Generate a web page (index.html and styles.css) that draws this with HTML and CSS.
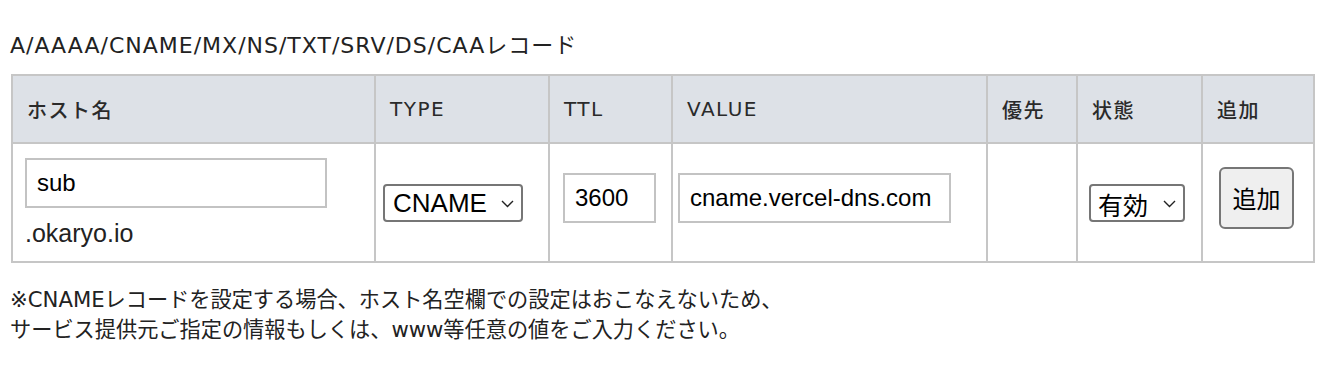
FILE: index.html
```html
<!DOCTYPE html>
<html lang="ja">
<head>
    <meta charset="UTF-8">
    <meta name="viewport" content="width=device-width, initial-scale=1.0">
    <title>DNSレコード設定</title>
    <link rel="stylesheet" href="styles.css">
</head>
<body>
    <p class="title">A/AAAA/CNAME/MX/NS/TXT/SRV/DS/CAAレコード</p>
    <table class="records">
        <colgroup>
            <col class="col-host">
            <col class="col-type">
            <col class="col-ttl">
            <col class="col-value">
            <col class="col-prio">
            <col class="col-status">
            <col class="col-add">
        </colgroup>
        <thead>
            <tr>
                <th>ホスト名</th>
                <th>TYPE</th>
                <th>TTL</th>
                <th>VALUE</th>
                <th>優先</th>
                <th>状態</th>
                <th>追加</th>
            </tr>
        </thead>
        <tbody>
            <tr>
                <td class="cell-host">
                    <input class="text-input host-input" type="text" value="sub">
                    <div class="domain">.okaryo.io</div>
                </td>
                <td class="cell-type">
                    <span class="select-wrap">
                        <select class="select type-select">
                            <option>A</option>
                            <option>AAAA</option>
                            <option selected>CNAME</option>
                            <option>MX</option>
                            <option>NS</option>
                            <option>TXT</option>
                            <option>SRV</option>
                            <option>DS</option>
                            <option>CAA</option>
                        </select>
                        <svg class="chevron" width="13" height="8" viewBox="0 0 13 8"><polyline points="1,1 6.5,6.5 12,1" fill="none" stroke="#222" stroke-width="1.4"/></svg>
                    </span>
                </td>
                <td class="cell-ttl">
                    <input class="text-input ttl-input" type="text" value="3600">
                </td>
                <td class="cell-value">
                    <input class="text-input value-input" type="text" value="cname.vercel-dns.com">
                </td>
                <td></td>
                <td class="cell-status">
                    <span class="select-wrap">
                        <select class="select status-select">
                            <option selected>有効</option>
                            <option>無効</option>
                        </select>
                        <svg class="chevron" width="13" height="8" viewBox="0 0 13 8"><polyline points="1,1 6.5,6.5 12,1" fill="none" stroke="#222" stroke-width="1.4"/></svg>
                    </span>
                </td>
                <td class="cell-add">
                    <button class="add-button" type="button">追加</button>
                </td>
            </tr>
        </tbody>
    </table>
    <p class="note">※CNAMEレコードを設定する場合、ホスト名空欄での設定はおこなえないため、<br>サービス提供元ご指定の情報もしくは、www等任意の値をご入力ください。</p>
</body>
</html>
```

FILE: styles.css
```css
body {
    font-family: "DejaVu Sans", "Noto Sans CJK JP", sans-serif;
    color: #222;
    margin: 0;
    padding: 0 10px;
}

.title {
    font-size: 22px;
    line-height: 30px;
    letter-spacing: 1px;
    margin: 31px 0 13px 0;
}

.records {
    border-collapse: collapse;
    table-layout: fixed;
    width: 1302px;
    margin-left: 1px;
}

.col-host { width: 363px; }
.col-type { width: 174px; }
.col-ttl { width: 123px; }
.col-value { width: 315px; }
.col-prio { width: 90px; }
.col-status { width: 125px; }
.col-add { width: 112px; }

.records th,
.records td {
    border: 2px solid #c6c6c6;
}

.records th {
    background-color: #dde1e7;
    color: #2a2a2a;
    font-size: 20px;
    font-weight: 500;
    letter-spacing: 1.5px;
    text-align: left;
    height: 66px;
    padding: 0 14px;
}

.records td {
    font-family: "Liberation Sans", "Noto Sans CJK JP", sans-serif;
    font-size: 24px;
    height: 117px;
    padding: 0;
    vertical-align: middle;
}

.cell-host { padding-left: 12px !important; }
.cell-type { padding-left: 7px !important; }
.cell-ttl { padding-left: 13px !important; }
.cell-value { padding-left: 5px !important; }
.cell-status { padding-left: 11px !important; }
.cell-add { padding-left: 16px !important; }

.text-input {
    box-sizing: border-box;
    height: 50px;
    border: 2px solid #c3c3c3;
    border-radius: 0;
    padding: 0 10px;
    font-family: "Liberation Sans", sans-serif;
    font-size: 24px;
    color: #000;
    background: #fff;
    outline: none;
}

.host-input {
    display: block;
    width: 302px;
    margin-bottom: 10px;
}

.ttl-input,
.value-input {
    display: block;
    margin-bottom: 10px;
}

.ttl-input {
    width: 93px;
}

.value-input {
    width: 273px;
}

.domain {
    font-size: 25px;
    line-height: 30px;
    color: #222;
}

.select-wrap {
    position: relative;
    display: inline-block;
    vertical-align: middle;
}

.select {
    appearance: none;
    -webkit-appearance: none;
    box-sizing: border-box;
    height: 38px;
    border: 2px solid #767676;
    border-radius: 4px;
    background: #fff;
    color: #000;
    padding: 0 30px 0 8px;
    font-family: "Liberation Sans", "Noto Sans CJK JP", sans-serif;
    font-size: 26px;
}

.type-select {
    width: 140px;
}

.status-select {
    width: 96px;
    font-family: "Noto Sans CJK JP", sans-serif;
    font-size: 25px;
    padding-left: 7px;
}

.chevron {
    position: absolute;
    right: 9px;
    top: 16px;
    pointer-events: none;
}

.add-button {
    display: block;
    box-sizing: border-box;
    width: 75px;
    height: 62px;
    margin-bottom: 10px;
    border: 2px solid #767676;
    border-radius: 6px;
    background: #efefef;
    color: #000;
    font-family: "Noto Sans CJK JP", sans-serif;
    font-size: 24px;
    padding: 0;
    cursor: pointer;
}

.note {
    font-size: 21.2px;
    line-height: 30px;
    margin: 22px 0 0 0;
}
```
